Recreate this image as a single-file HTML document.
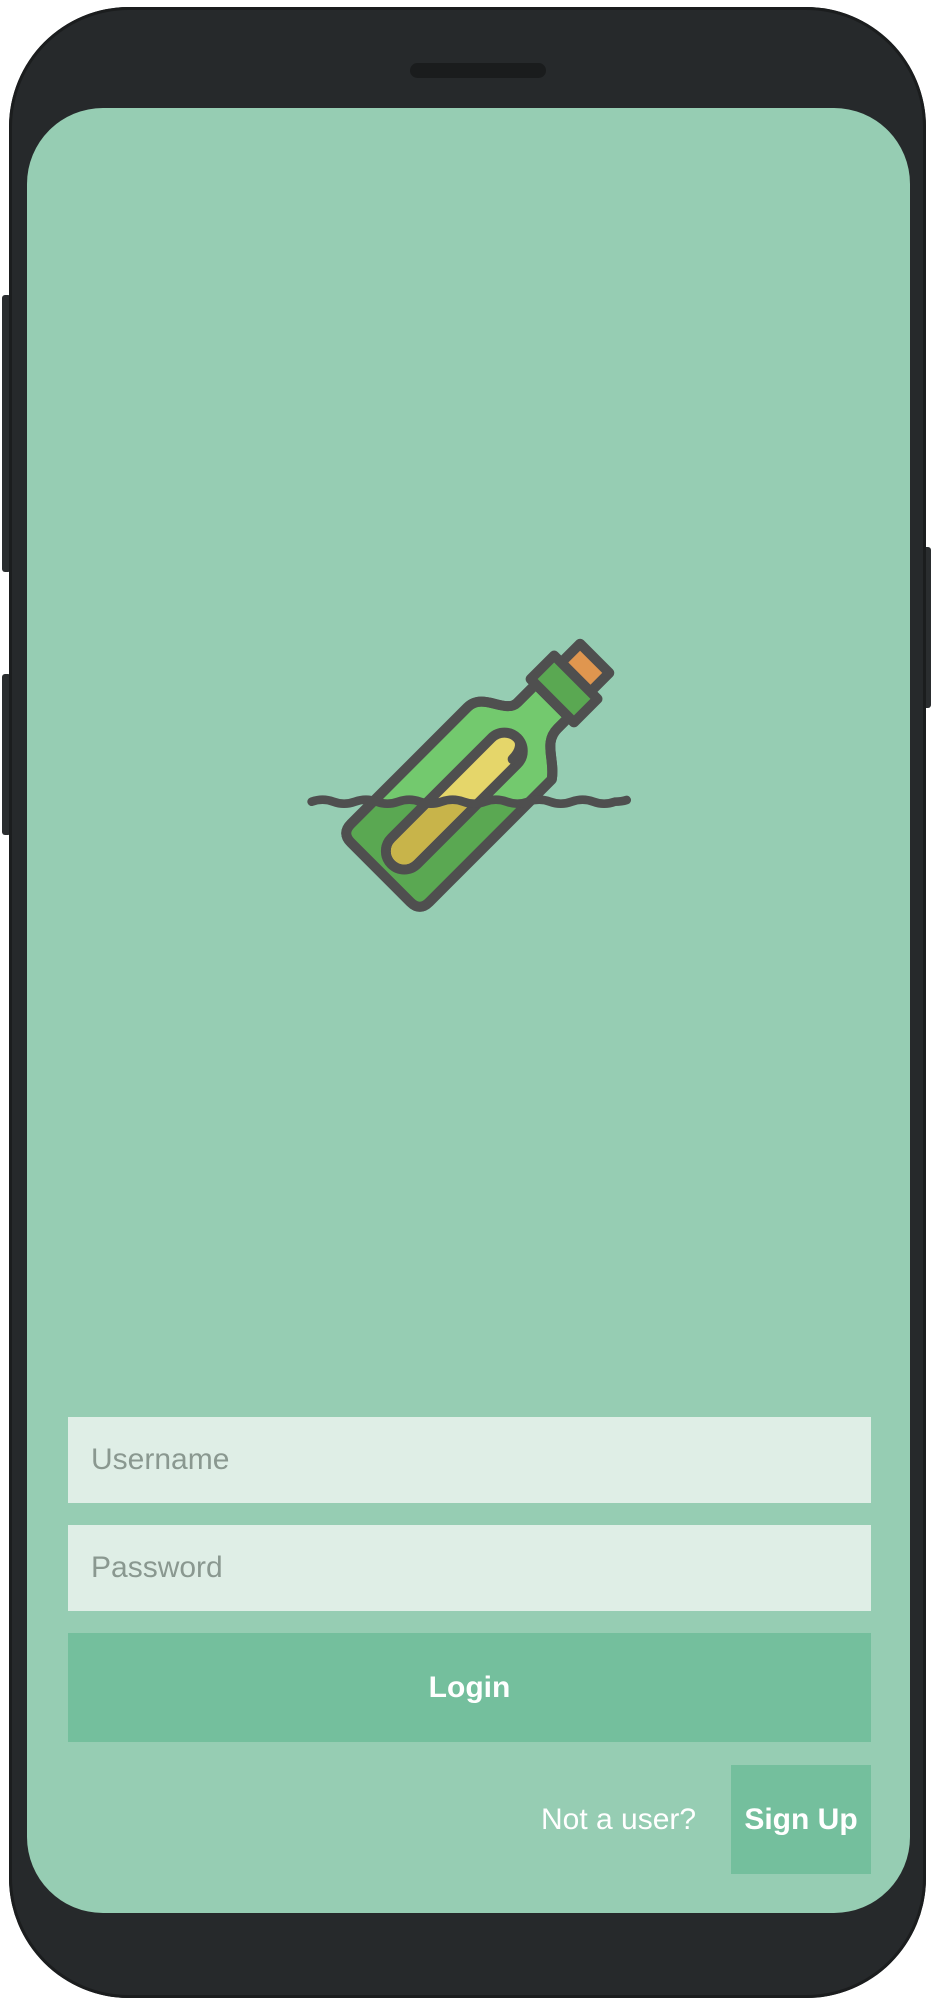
<!DOCTYPE html>
<html><head><meta charset="utf-8"><style>
html,body{margin:0;padding:0;background:#fff;}
body{width:933px;height:2000px;position:relative;overflow:hidden;font-family:"Liberation Sans",Roboto,sans-serif;}
.phone{position:absolute;left:9px;top:7px;width:917px;height:1991px;background:#26292b;border-radius:120px;box-shadow:inset 0 0 0 3px #1b1d1e;}
.btn{position:absolute;background:#2a2d2f;border-radius:3px;}
.speaker{position:absolute;left:401px;top:56px;width:136px;height:15px;border-radius:8px;background:#1a1c1d;}
.screen{position:absolute;left:27px;top:108px;width:883px;height:1805px;background:#96cdb3;border-radius:76px;overflow:hidden;}
.field{position:absolute;left:41px;width:803px;height:86px;background:#dfeee6;color:#8a9890;font-size:30px;line-height:86px;box-sizing:border-box;padding-left:23px;}
.login{position:absolute;left:41px;top:1525px;width:803px;height:109px;background:#74bf9d;color:#fff;font-weight:bold;font-size:30px;line-height:109px;text-align:center;}
.nu{position:absolute;left:514px;top:1657px;height:109px;line-height:109px;color:#fff;font-size:30px;}
.su{position:absolute;left:704px;top:1657px;width:140px;height:109px;background:#74bf9d;color:#fff;font-weight:bold;font-size:30px;line-height:109px;text-align:center;}
</style></head><body>
<div class="btn" style="left:2px;top:295px;width:9px;height:277px"></div>
<div class="btn" style="left:2px;top:674px;width:9px;height:161px"></div>
<div class="btn" style="left:922px;top:547px;width:9px;height:161px"></div>
<div class="phone"><div class="speaker"></div></div>
<div class="screen">
<svg style="position:absolute;left:253px;top:512px" width="380" height="320" viewBox="0 0 1140 960">
<defs><clipPath id="below"><rect x="0" y="545" width="1140" height="500"/></clipPath></defs>
<g transform="translate(302,757) rotate(-45)" stroke="#4f4f4f" stroke-width="30" stroke-linejoin="round" stroke-linecap="round">
<path id="bt" d="M40,-166 L534,-166 C600,-166 600,-70 650,-70 L728,-70 L728,70 L680,70 C620,70 610,130 560,166 L40,166 Q0,166 0,126 L0,-126 Q0,-166 40,-166 Z" fill="#73c96e"/>
</g>
<g clip-path="url(#below)"><g transform="translate(302,757) rotate(-45)">
<path d="M40,-166 L534,-166 C600,-166 600,-70 650,-70 L728,-70 L728,70 L680,70 C620,70 610,130 560,166 L40,166 Q0,166 0,126 L0,-126 Q0,-166 40,-166 Z" fill="#5aa852"/></g></g>
<g transform="translate(302,757) rotate(-45)" stroke="#4f4f4f" stroke-width="30" stroke-linejoin="round" stroke-linecap="round" fill="none">
<path d="M40,-166 L534,-166 C600,-166 600,-70 650,-70 L728,-70 L728,70 L680,70 C620,70 610,130 560,166 L40,166 Q0,166 0,126 L0,-126 Q0,-166 40,-166 Z"/>
<rect x="828" y="-62" width="80" height="124" fill="#e0964f"/>
<rect x="728" y="-92" width="100" height="184" fill="#5aa852"/>
<rect x="40" y="-50" width="535" height="110" rx="55" fill="#e5d66a"/>
<path d="M520,40 C560,40 575,20 575,5"/>
</g>
<g clip-path="url(#below)"><g transform="translate(302,757) rotate(-45)">
<rect x="55" y="-35" width="505" height="80" rx="40" fill="#c8b44a"/></g></g>
<path d="M95,545 q33,-12 65,0 t65,0 t65,0 t65,0 t65,0 t65,0 t65,0 t65,0 t65,0 t65,0 t65,0 t65,0 t65,0 t65,0 q20,0 35,-5" fill="none" stroke="#4f4f4f" stroke-width="26" stroke-linecap="round"/>
</svg>
<div class="field" style="top:1309px">Username</div>
<div class="field" style="top:1417px">Password</div>
<div class="login">Login</div>
<div class="nu">Not a user?</div>
<div class="su">Sign Up</div>
</div>
</body></html>
